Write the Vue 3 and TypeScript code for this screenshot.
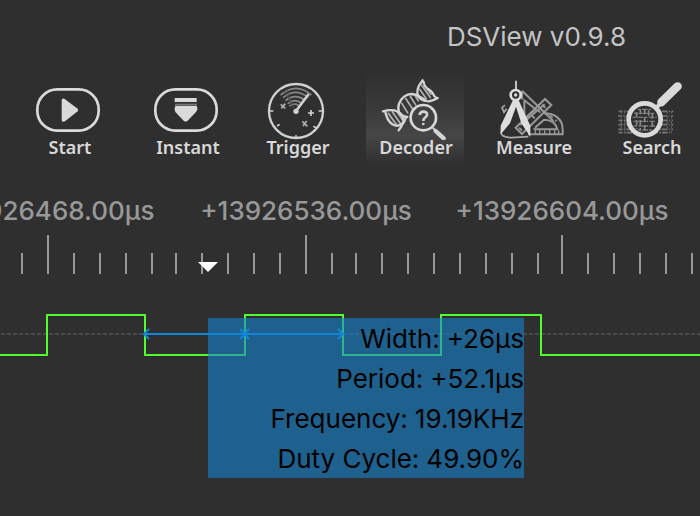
<script setup lang="ts">
interface Tick {
  x: number
  label?: string
}

const minor = [21, 73, 99, 125, 151, 175, 201, 227, 253, 279, 331, 355, 381, 407, 433, 459, 485, 511, 537, 587, 613, 639, 665, 691]
const major: Tick[] = [
  { x: 47, label: '+13926468.00µs' },
  { x: 305, label: '+13926536.00µs' },
  { x: 561, label: '+13926604.00µs' },
]
const readings: [string, string][] = [
  ['Width', '+26µs'],
  ['Period', '+52.1µs'],
  ['Frequency', '19.19KHz'],
  ['Duty Cycle', '49.90%'],
]
</script>

<template>
  <main class="app">
    <header class="titlebar"><h1>DSView v0.9.8</h1></header>

    <nav class="toolbar" aria-label="Tools">
      <div class="group">
        <button type="button" class="tool">
          <svg class="icon" viewBox="0 12 294 198" aria-hidden="true">
            <rect x="52" y="58" width="184" height="124" rx="60" fill="none" stroke="#dadada" stroke-width="8" />
            <path d="M125 90q0-6 8-4l40 30q3 4 0 8l-38 30q-10 4-10-4z" fill="#dadada" />
          </svg>
          <span>Start</span>
        </button>
        <button type="button" class="tool">
          <svg class="icon" viewBox="-6 12 294 198" aria-hidden="true">
            <rect x="46" y="58" width="184" height="124" rx="60" fill="none" stroke="#dadada" stroke-width="8" />
            <path d="M104 84h66v12h-66zM106 108h64q5 10-2 18l-25 26q-6 5-12 0l-25-26q-5-8 0-18z" fill="#dadada" />
            <path d="M105 104h66" stroke="#777" stroke-width="6" />
          </svg>
          <span>Instant</span>
        </button>
      </div>
      <div class="group">
        <button type="button" class="tool">
          <svg class="icon" viewBox="-6 12 294 198" fill="none" stroke="#d0d0d0" aria-hidden="true">
            <circle cx="138" cy="123" r="81" stroke-width="7" />
            <g stroke="#888" stroke-width="5">
              <path d="M92 75q46-40 92 0M99 83q38-32 76 0M106 92q31-24 60 0M113 101q24-18 42 0M118 108q18-12 29 0" />
            </g>
            <path d="M103 63l30 54M112 58l14 50" stroke="#555" stroke-width="3" />
            <path d="M138 123l38-51" stroke-width="8" />
            <circle cx="138" cy="124" r="8" fill="#d0d0d0" stroke="none" />
            <path d="M56 123h14M206 123h14M138 196v10M81 168l8-5M190 169l8 4" stroke-width="5" />
            <path d="M174 129h18M183 120v18" stroke-width="5" />
            <path d="M92 103l14 12M94 115l12-14M157 154l15 15M159 168l11-15" stroke="#b0b0b0" stroke-width="5" />
          </svg>
          <span>Trigger</span>
        </button>
        <button type="button" class="tool active" aria-pressed="true">
          <svg class="icon" viewBox="18 12 294 198" fill="none" stroke="#d4d4d4" aria-hidden="true">
            <g stroke="#b4b4b4" stroke-width="5">
              <path d="M84 128l28 40M96 124l26 38M110 124l18 26" />
              <path d="M124 98l20 32M136 84l24 36M150 78l18 28M166 78l10 16" />
              <path d="M178 56l22 32M184 44l28 40M192 44l22 30" />
            </g>
            <g stroke-width="7" stroke-linecap="round">
              <path d="M69 124c34-10 62 2 61 28c-1 12-7 20-14 29" />
              <path d="M76 127c6 24 16 42 38 40c16-2 20-12 24-26" />
              <path d="M142 141c-28-2-30-22-25-40c6-18 22-29 38-29c20 1 34 15 44 21c12 4 22-2 34-9" />
              <path d="M188 31c-16 20-20 38-12 50c6 8 12 10 18 12M191 36c2 22 18 20 26 32c4 8 8 14 14 17" />
            </g>
            <circle cx="190" cy="143" r="38" fill="#424242" stroke="#d8d8d8" stroke-width="8" />
            <path d="M179 135q1-10 11-10q12 0 11 10q-1 5-7 9q-4 3-4 9" stroke-width="8" />
            <circle cx="190" cy="162" r="4" fill="#d4d4d4" stroke="none" />
            <path d="M218 173l12 12" stroke-width="6" />
            <path d="M227 183l24 22" stroke-width="13" stroke-linecap="round" />
          </svg>
          <span>Decoder</span>
        </button>
        <button type="button" class="tool">
          <svg class="icon" viewBox="-3 12 294 198" fill="none" aria-hidden="true">
            <g stroke="#989898">
              <path d="M129 193h104v-15c0-33-26-49-58-48M145 178h72c-4-17-18-29-40-29l-27 24" stroke-width="6" />
              <path d="M111 62l94 91M118 91v55l34-28zM111 63v25" stroke-width="6" />
              <path d="M92 173l88-86 19 18-88 87zM106 165l73-62M102 173l9 9M121 155l9 9M140 136l9 9M157 119l9 9M171 104l10 9" stroke-width="6" />
              <path d="M151 181v11M164 181v11M179 181v11M194 181v11M209 181v11M221 181v11M195 136l8 7M216 149l-7 6" stroke-width="4" />
            </g>
            <path d="M60 105l-9 8 6 14 8-11M50 182q-8 20 30 21l50-3" stroke="#aaa" stroke-width="5" />
            <path d="M83 92L47 167v26l28-33 18-50 16 50 27 40v-33l-35-76z" fill="#dedede" />
            <path d="M93 32v27" stroke="#dedede" stroke-width="5" />
            <circle cx="92" cy="75" r="15" fill="#303030" stroke="#dedede" stroke-width="8" />
            <circle cx="92" cy="75" r="5" fill="#dedede" />
          </svg>
          <span>Measure</span>
        </button>
        <button type="button" class="tool">
          <svg class="icon" viewBox="6 12 294 198" fill="none" aria-hidden="true">
            <g stroke="#777" stroke-width="5">
              <path d="M56 124h164M54 138h165M56 151h163M55 164h165M55 178h164M56 188h160" stroke-dasharray="12 4 5 3 17 4 3 5" />
              <path d="M64 123v66M74 123v66M202 123v66M214 123v66" stroke="#5a5a5a" stroke-width="4" stroke-dasharray="8 7" />
            </g>
            <circle cx="134" cy="149" r="47" fill="#303030" />
            <path d="M112 118h42M102 130h61M98 142h72M100 154h68M101 168h64M113 180h43" stroke="#777" stroke-width="4" stroke-dasharray="10 4 17 3" />
            <path d="M110 126v50M121 117v20M121 150v32M134 117v64M146 121v22M157 130v40" stroke="#888" stroke-width="5" stroke-dasharray="16 8" />
            <circle cx="134" cy="148" r="48" stroke="#dadada" stroke-width="14" />
            <path d="M169 113l14-14" stroke="#dadada" stroke-width="12" />
            <path d="M184 97l49-48" stroke="#dadada" stroke-width="25" stroke-linecap="round" />
          </svg>
          <span>Search</span>
        </button>
      </div>
    </nav>

    <section class="ruler" aria-label="Time ruler">
      <svg width="100%" height="126" aria-hidden="true">
        <g fill="#989898">
          <rect v-for="x in minor" :key="x" :x="x" y="89" width="2" height="21" />
          <rect v-for="t in major" :key="t.x" :x="t.x" y="71" width="2" height="39" />
          <text v-for="t in major" :key="t.label" :x="t.x + 1" y="56" text-anchor="middle">{{ t.label }}</text>
        </g>
        <path d="M198 98h20l-10 10z" fill="#fff" />
      </svg>
    </section>

    <section class="trace" aria-label="Signal">
      <svg width="100%" height="226" fill="none" aria-hidden="true">
        <line x1="1" y1="44" x2="100%" y2="44" stroke="#4a4a4a" stroke-width="2" stroke-dasharray="4 2" />
        <path d="M0 65H47V25H145V65H245V25H343V65H441V25H541V65H4000" stroke="#50ff30" stroke-width="2" />
      </svg>
      <dl class="readout">
        <div v-for="[name, value] in readings" :key="name">
          <dt>{{ name }}:</dt>
          <dd>{{ value }}</dd>
        </div>
      </dl>
      <svg class="span-marks" width="100%" height="90" fill="none" aria-hidden="true">
        <path d="M145 44H343M149 39l-5 5 5 5M240 39l5 5-5 5M249 39l-5 5 5 5M338 39l5 5-5 5" stroke="#1185d6" stroke-width="2" />
      </svg>
    </section>
  </main>
</template>

<style>
body {
  margin: 0;
  background: #2f2f2f;
}
</style>

<style scoped>
.app {
  overflow: hidden;
  background: #2f2f2f;
  font-family: Inter, "Liberation Sans", sans-serif;
  font-size: 26px;
}
.titlebar {
  padding-right: 74px;
}
h1 {
  margin: 0;
  color: #c4c4c4;
  font-size: 26px;
  font-weight: 400;
  line-height: 74px;
  text-align: right;
}
.toolbar {
  display: flex;
  gap: 12px;
  padding-left: 20px;
}
.group {
  display: flex;
  gap: 20px;
}
.tool {
  display: flex;
  flex-direction: column;
  align-items: center;
  flex: none;
  width: 98px;
  padding: 0 0 10px;
  border: 0;
  background: none;
  color: #d8d8d8;
  font: 600 18px/14px "Noto Sans", "Open Sans", sans-serif;
}
.tool span {
  padding-left: 2px;
}
.tool.active {
  background: linear-gradient(#303030, #383838 35%, #464646 68%, #303030);
}
.icon {
  display: block;
  width: 98px;
  height: 66px;
}
.ruler svg,
.trace svg {
  display: block;
}
.ruler text {
  font-size: 26px;
  font-weight: 500;
}
.trace {
  position: relative;
}
.readout {
  position: absolute;
  left: 208px;
  top: 28px;
  width: 316px;
  height: 160px;
  box-sizing: border-box;
  padding-top: 1px;
  margin: 0;
  background: rgba(20, 132, 207, 0.6);
  color: #000;
  line-height: 40px;
}
.readout div {
  display: flex;
  justify-content: flex-end;
  gap: 7px;
}
.readout dd {
  margin: 0;
}
.span-marks {
  position: absolute;
  left: 0;
  top: 0;
}
</style>
